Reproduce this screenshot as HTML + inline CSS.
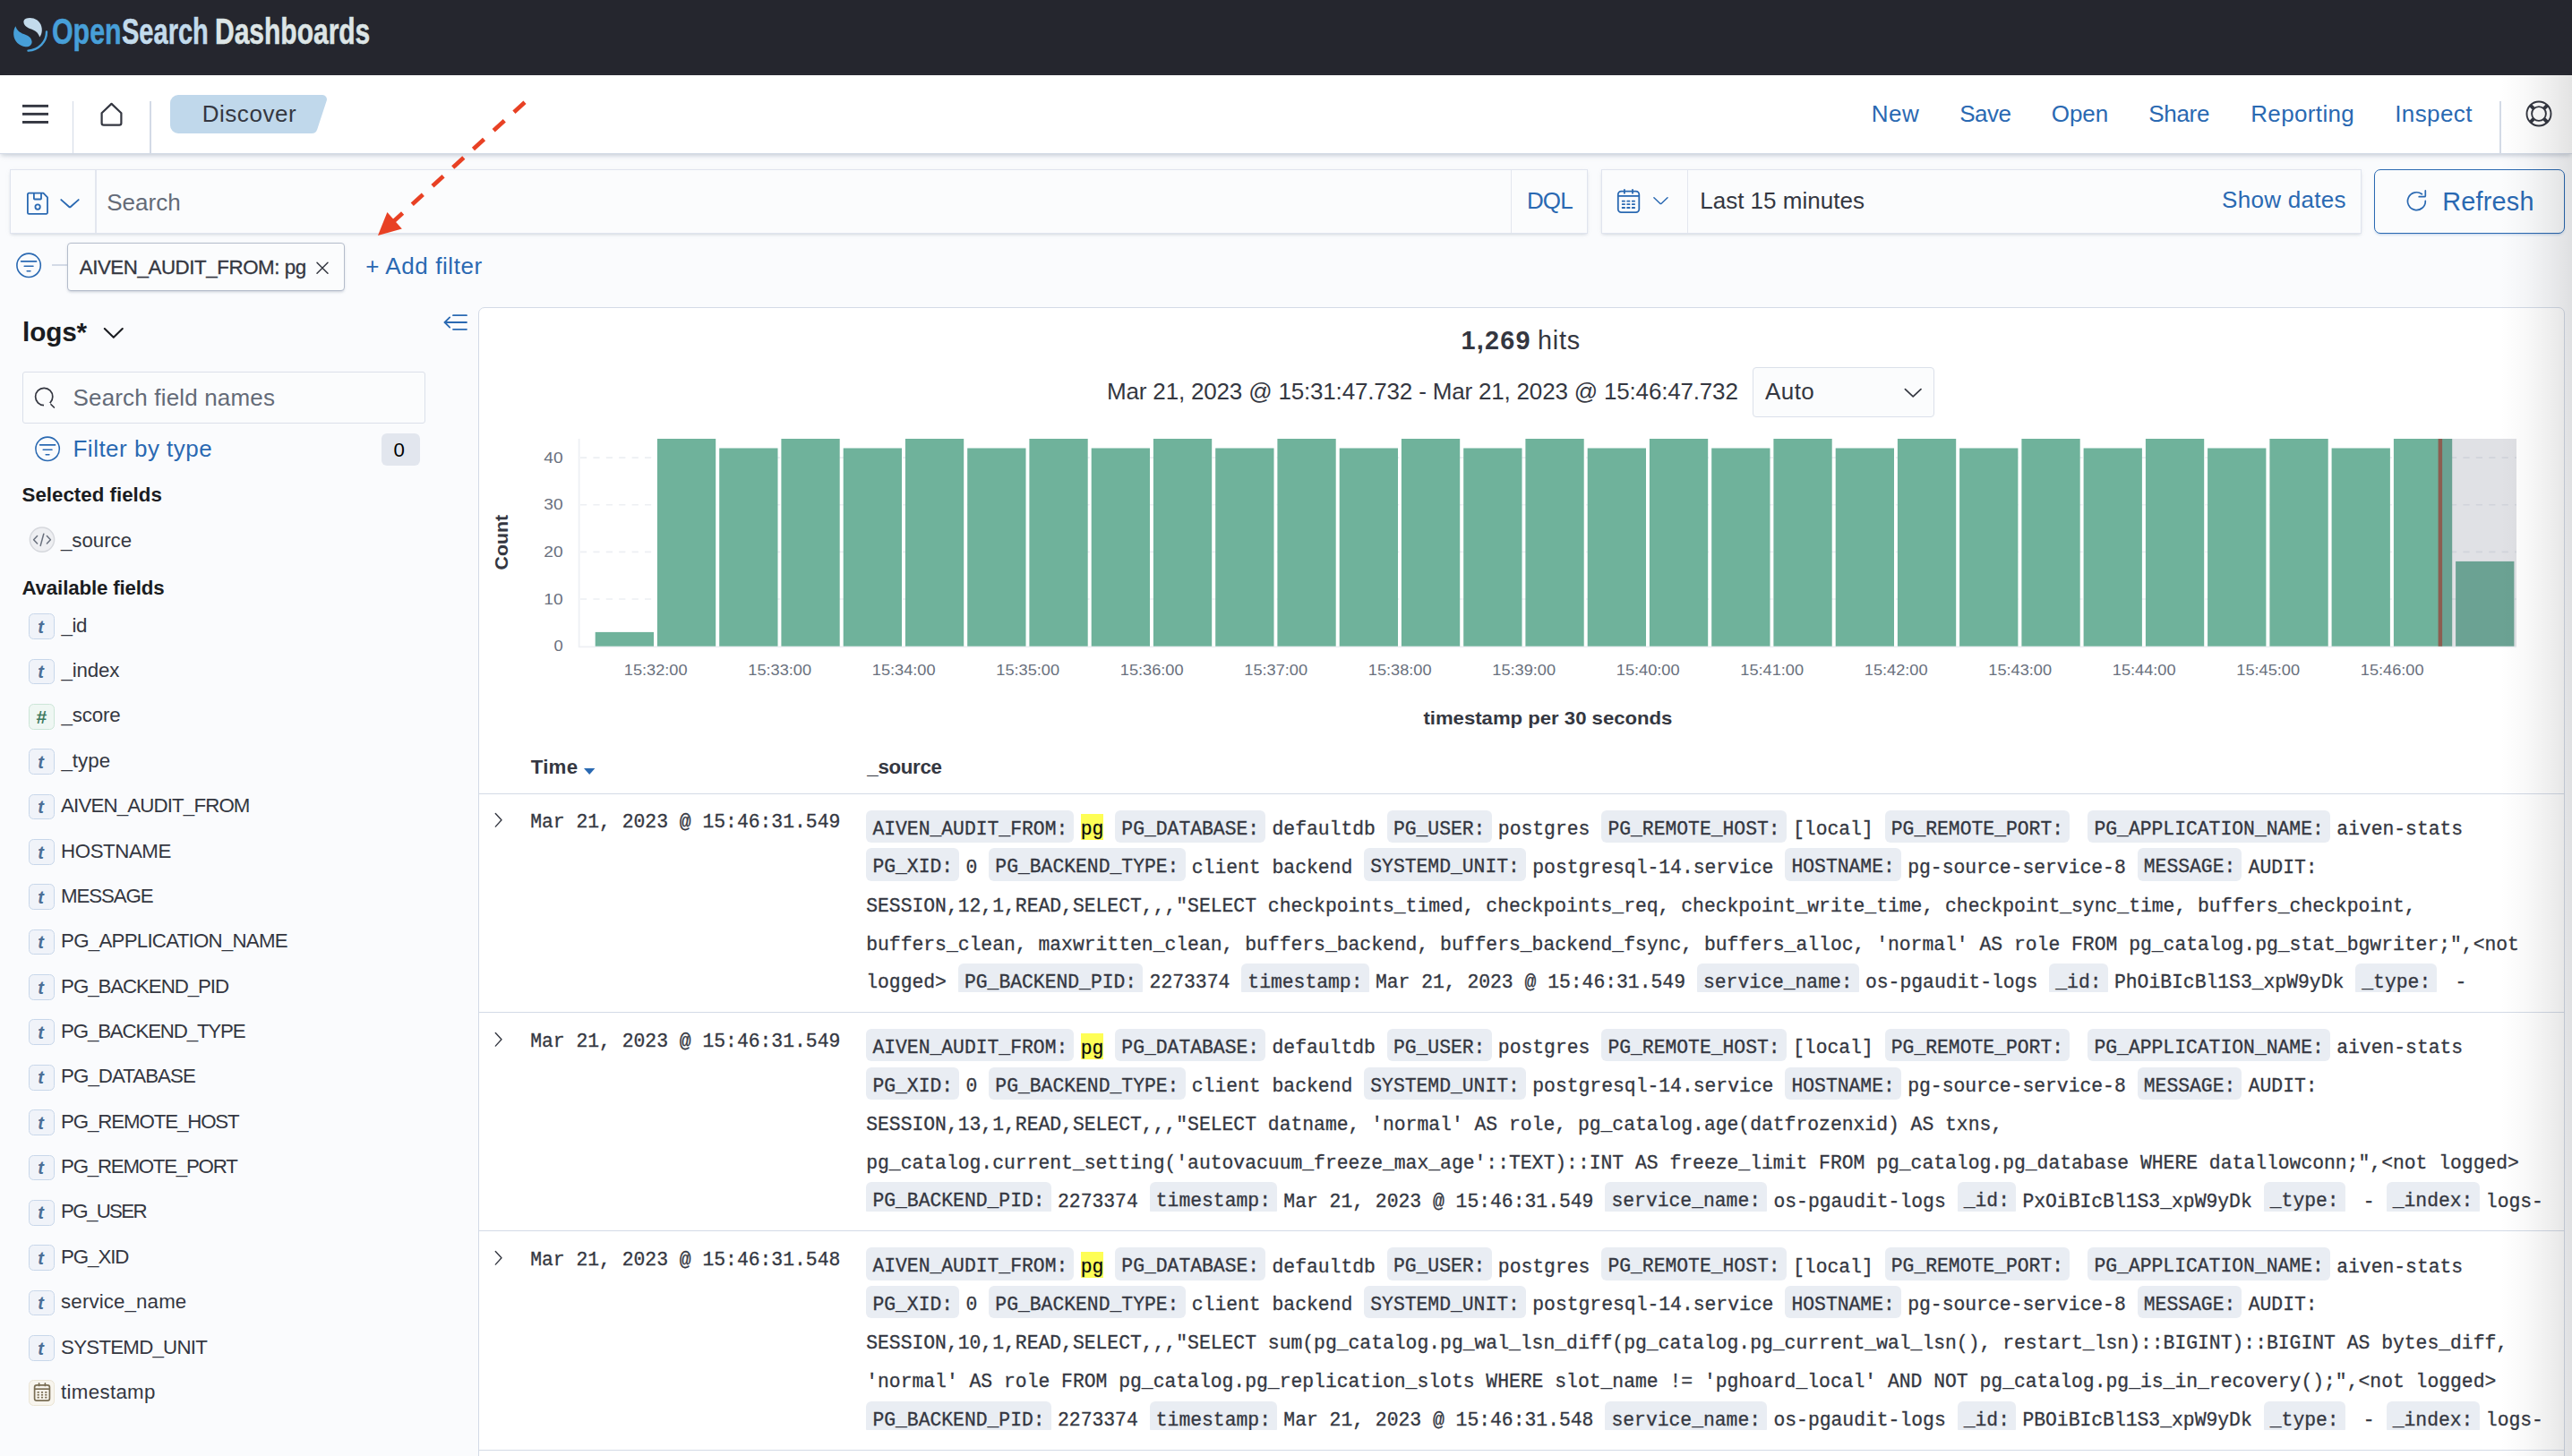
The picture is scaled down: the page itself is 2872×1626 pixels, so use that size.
<!DOCTYPE html><html lang='en'><head><meta charset='utf-8'><title>Discover - OpenSearch Dashboards</title><style>
*{box-sizing:border-box}
html,body{margin:0;padding:0}
html{overflow:hidden;background:#fafbfd}
body{width:2872px;height:1626px;overflow:hidden;background:#fafbfd;font-family:'Liberation Sans',sans-serif;color:#343741;position:relative}
.abs{position:absolute}
.t{position:absolute;white-space:pre;line-height:1;font-family:'Liberation Sans',sans-serif}
svg{position:absolute;overflow:visible}
#hdr{left:0;top:0;width:2872px;height:83.5px;background:#25262e}
.logo{position:absolute;white-space:pre;line-height:1;font-weight:700;font-family:'Liberation Sans',sans-serif;transform-origin:0 0}
#nav{left:0;top:83.5px;width:2872px;height:88px;background:#fff;border-bottom:1.5px solid #d3dae6;box-shadow:0 3px 4px -1px rgba(152,162,179,.35),0 2px 9px -3px rgba(152,162,179,.3)}
.vdiv{position:absolute;width:1.4px;background:#d3dae6}
.box{position:absolute;background:#fbfcfd;border:1.6px solid #e0e4ee;box-shadow:0 2px 3px -1px rgba(152,162,179,.3),0 1px 6px -2px rgba(152,162,179,.25)}
.mono{font-family:'Liberation Mono',monospace;font-size:21.37px;white-space:pre;color:#343741;-webkit-text-stroke:0.3px #343741}
.ln{position:absolute;left:967.2px;height:43.2px;line-height:43.2px}
.k{background:#e9edf3;border-radius:6px;padding:9.3px 7.2px 3px 7.2px;margin-right:7.2px}
mark{background:#fefe55;color:#000;padding:4.5px 0 0.5px 0}
.md{-webkit-text-stroke:0.3px #343741}
.tok{position:absolute;left:32.1px;width:28.7px;height:28.8px;border:1.8px solid;border-radius:5.5px}
.row{position:absolute;left:535px;width:2328px;border-top:1.3px solid #d3dae6}
.clip{position:absolute;left:960px;width:1895px;overflow:hidden}
</style></head><body>
<header id="hdr" class="abs">
<svg style="left:14px;top:19px" width="40" height="39" viewBox="0 0 40 39">
<path d="M12.5 4.2 C13.5 1.2 19 0.2 23.5 1.6 C29.5 3.6 33.2 9 32.8 15.2 C32.6 18.6 31.6 20.6 30.2 22.4 C28.8 17.6 25.4 15.2 21 13.6 C16.6 12 11.6 9 12.5 4.2Z" fill="#c3dbec"/>
<path d="M3.4 10.2 C4.6 14.6 8 17.4 12.6 19 C17.6 20.8 21.2 23.2 21.6 27.4 C21.9 31 18.8 33.4 14.4 33.2 C7.6 32.8 1.6 27 1.2 19.6 C1 16 1.8 12.8 3.4 10.2Z" fill="#479fd8"/>
<path d="M38 16.5 C38.2 27.5 29.5 36.6 17.5 37.6" fill="none" stroke="#479fd8" stroke-width="2.4" stroke-linecap="round"/>
</svg>
<span class="logo" style="left:58.2px;top:14.9px;font-size:41.3px;color:#479fd8;-webkit-text-stroke:0.55px #479fd8;transform:scaleX(0.7352)">Open</span><span class="logo" style="left:136.1px;top:14.9px;font-size:41.3px;color:#c3dbec;-webkit-text-stroke:0.55px #c3dbec;transform:scaleX(0.7027)">Search</span><span class="logo" style="left:239.7px;top:14.9px;font-size:41.3px;color:#dde5e6;-webkit-text-stroke:0.55px #dde5e6;transform:scaleX(0.7261)">Dashboards</span>
</header>
<nav id="nav" class="abs"></nav>
<div class="vdiv" style="left:80.7px;top:113px;height:58.5px"></div>
<div class="vdiv" style="left:167.2px;top:113px;height:58.5px"></div>
<div class="vdiv" style="left:2791.4px;top:113px;height:58.5px"></div>
<svg style="left:25px;top:116px" width="30" height="24"><g fill="#343741"><rect x="0" y="0.9" width="29" height="2.9"/><rect x="0" y="9.9" width="29" height="2.9"/><rect x="0" y="19" width="29" height="2.9"/></g></svg>
<svg style="left:110px;top:113px" width="30" height="30"><path d="M3.6 13.2 L14.5 2.9 L25.4 13.2 V24.4 a2.2 2.2 0 0 1 -2.2 2.2 H5.8 a2.2 2.2 0 0 1 -2.2 -2.2 Z" fill="none" stroke="#343741" stroke-width="2.2" stroke-linejoin="round"/></svg>
<svg style="left:190px;top:106px" width="176" height="43"><path d="M9 0 H170 a5 5 0 0 1 4.7 6.6 L164.2 38.5 a6.5 6.5 0 0 1 -6.2 4.5 H9 a9 9 0 0 1 -9 -9 V9 a9 9 0 0 1 9 -9Z" fill="#c0d8eb"/></svg>
<span class="t" style="left:225.7px;top:114.0px;font-size:26.01px;letter-spacing:0.54px;color:#343741;">Discover</span>
<span class="t" style="left:2089.8px;top:114.0px;font-size:26.01px;letter-spacing:0.46px;color:#2a69b2;">New</span>
<span class="t" style="left:2188.2px;top:114.0px;font-size:26.01px;letter-spacing:-0.49px;color:#2a69b2;">Save</span>
<span class="t" style="left:2290.7px;top:114.0px;font-size:26.01px;letter-spacing:-0.03px;color:#2a69b2;">Open</span>
<span class="t" style="left:2399.2px;top:114.0px;font-size:26.01px;letter-spacing:-0.28px;color:#2a69b2;">Share</span>
<span class="t" style="left:2513.2px;top:114.0px;font-size:26.01px;letter-spacing:0.36px;color:#2a69b2;">Reporting</span>
<span class="t" style="left:2674.2px;top:114.0px;font-size:26.01px;letter-spacing:0.41px;color:#2a69b2;">Inspect</span>
<svg style="left:2819.5px;top:112.3px" width="30" height="30" viewBox="0 0 30 30"><g fill="none" stroke="#343741" stroke-width="1.9"><circle cx="15" cy="15" r="13.5"/><circle cx="15" cy="15" r="7.9"/><path d="M5.6 5.6 L9.3 9.3 M24.4 5.6 L20.7 9.3 M5.6 24.4 L9.3 20.7 M24.4 24.4 L20.7 20.7" stroke-width="4"/></g></svg>
<div class="box" style="left:10.5px;top:189px;width:1762px;height:71.5px"></div>
<div class="vdiv" style="left:106.3px;top:190px;height:69.5px;background:#e3e7ef"></div>
<div class="vdiv" style="left:1686.6px;top:190px;height:69.5px;background:#e3e7ef"></div>
<svg style="left:29px;top:214px" width="26" height="27" viewBox="0 0 26 27"><g fill="none" stroke="#2a69b2" stroke-width="1.8" stroke-linejoin="round"><path d="M3.2 1.7 H19.4 L24 6.4 V23.5 a1.3 1.3 0 0 1 -1.3 1.3 H3.2 a1.3 1.3 0 0 1 -1.3 -1.3 V3 a1.3 1.3 0 0 1 1.3 -1.3Z"/><path d="M8.9 1.9 V7.7 a0.8 0.8 0 0 0 0.8 0.8 H16.2 a0.8 0.8 0 0 0 0.8 -0.8 V1.9"/><circle cx="13.1" cy="17.1" r="2.7"/></g></svg>
<svg style="left:67px;top:220px" width="23" height="14"><path d="M1.3 3.1 L10.2 11 a1.2 1.2 0 0 0 1.6 0 L20.7 3.1" fill="none" stroke="#2a69b2" stroke-width="1.9" stroke-linecap="round" stroke-linejoin="round"/></svg>
<span class="t" style="left:119.2px;top:212.6px;font-size:26.01px;letter-spacing:0.02px;color:#646b78;">Search</span>
<span class="t" style="left:1704.9px;top:210.9px;font-size:26.01px;letter-spacing:-0.82px;color:#2a69b2;">DQL</span>
<div class="box" style="left:1787.5px;top:189px;width:849px;height:71.5px"></div>
<div class="vdiv" style="left:1883.5px;top:190px;height:69.5px;background:#e3e7ef"></div>
<svg style="left:1805px;top:210px" width="28" height="29" viewBox="0 0 28 29"><g fill="none" stroke="#2a69b2" stroke-width="1.8"><rect x="1.8" y="3.6" width="23.5" height="23.6" rx="3.6"/><path d="M1.8 8.9 H25.3"/><path d="M8.9 1.8 V5.8 M18 1.8 V5.8" stroke-linecap="round"/></g><g fill="#2a69b2"><rect x="5.9" y="13.7" width="3.9" height="1.9" rx=".5"/><rect x="11.4" y="13.7" width="3.9" height="1.9" rx=".5"/><rect x="17" y="13.7" width="3.9" height="1.9" rx=".5"/><rect x="5.9" y="17.2" width="3.9" height="1.9" rx=".5"/><rect x="11.4" y="17.2" width="3.9" height="1.9" rx=".5"/><rect x="17" y="17.2" width="3.9" height="1.9" rx=".5"/><rect x="5.9" y="21" width="3.9" height="1.9" rx=".5"/><rect x="11.4" y="21" width="3.9" height="1.9" rx=".5"/><rect x="17" y="21" width="3.9" height="1.9" rx=".5"/></g></svg>
<svg style="left:1846px;top:219px" width="18" height="11"><path d="M0.9 1.8 L7.7 8.2 a1.1 1.1 0 0 0 1.5 0 L16 1.8" fill="none" stroke="#2a69b2" stroke-width="1.5" stroke-linecap="round" stroke-linejoin="round"/></svg>
<span class="t" style="left:1898.2px;top:210.9px;font-size:26.01px;letter-spacing:0.01px;color:#343741;">Last 15 minutes</span>
<span class="t" style="left:2481.0px;top:210.3px;font-size:26.01px;letter-spacing:0.30px;color:#2a69b2;">Show dates</span>
<div class="abs" style="left:2651px;top:189px;width:212.6px;height:71.5px;border:1.8px solid #2a69b2;border-radius:7px;background:#fbfcfd;box-shadow:0 2px 3px -1px rgba(42,105,178,.3)"></div>
<svg style="left:2686px;top:211px" width="26" height="26" viewBox="0 0 26 26"><path d="M18.4 5.8 A9.9 9.9 0 1 0 22.3 13.4" fill="none" stroke="#2a69b2" stroke-width="1.7" stroke-linecap="round"/><path d="M22.3 1.9 V7.7 a1 1 0 0 1 -1 1 H15.2" fill="none" stroke="#2a69b2" stroke-width="1.7" stroke-linecap="round" stroke-linejoin="round"/></svg>
<span class="t" style="left:2727.2px;top:210.6px;font-size:28.8px;letter-spacing:0.25px;color:#2a69b2;">Refresh</span>
<svg style="left:17px;top:281px" width="31" height="31" viewBox="0 0 31 31"><g fill="none" stroke="#2a69b2" stroke-width="1.6" stroke-linecap="round"><circle cx="15.1" cy="15.3" r="13.2"/><path d="M6.6 10.9 H23.6 M10.2 16.3 H20 M13.2 21.8 H16.9"/></g></svg>
<div class="abs" style="left:57.5px;top:295.2px;width:18px;height:1.8px;background:#d3dae6"></div>
<div class="abs" style="left:75.4px;top:271.3px;width:309.3px;height:53.4px;background:#fbfcfd;border:1.9px solid #b4bccb;border-radius:4px;box-shadow:0 2px 3px -1px rgba(152,162,179,.45),0 1px 5px -2px rgba(152,162,179,.3)"></div>
<span class="t md" style="left:88.7px;top:288.0px;font-size:22.29px;letter-spacing:-0.41px;color:#343741;">AIVEN_AUDIT_FROM: pg</span>
<svg style="left:352px;top:291px" width="16" height="16"><path d="M2 2.2 L14 14.2 M14 2.2 L2 14.2" stroke="#343741" stroke-width="1.5" stroke-linecap="round"/></svg>
<span class="t" style="left:408.2px;top:284.3px;font-size:26.01px;letter-spacing:0.59px;color:#2a69b2;">+ Add filter</span>
<span class="t" style="left:25.1px;top:355.8px;font-size:29.72px;letter-spacing:-0.17px;color:#1a1c21;font-weight:700;">logs*</span>
<svg style="left:115px;top:365px" width="24" height="15"><path d="M1.8 2 L11.8 11.8 L21.8 2" fill="none" stroke="#1a1c21" stroke-width="2.1" stroke-linecap="round" stroke-linejoin="round"/></svg>
<svg style="left:495px;top:350px" width="28" height="20" viewBox="0 0 28 20"><g fill="none" stroke="#2a69b2" stroke-width="1.8" stroke-linecap="round" stroke-linejoin="round"><path d="M11 2.2 H26 M1.6 10 H26 M11 17.8 H26"/><path d="M7.2 4.4 L1.6 10 L7.2 15.6"/></g></svg>
<div class="abs" style="left:25.2px;top:415.3px;width:450.3px;height:57.6px;background:#fbfcfd;border:1.8px solid #dbe0ea;border-radius:3px"></div>
<svg style="left:38px;top:432px" width="25" height="25"><circle cx="11.2" cy="11" r="9.6" fill="none" stroke="#343741" stroke-width="1.7"/><path d="M17.2 18 L22.4 23" stroke="#343741" stroke-width="1.7" stroke-linecap="round"/><path d="M11 20.8 a9.6 9.6 0 0 0 6.8 -2.8" stroke="#fbfcfd" stroke-width="3" fill="none"/></svg>
<span class="t" style="left:81.5px;top:430.5px;font-size:26.01px;letter-spacing:0.17px;color:#646b78;">Search field names</span>
<svg style="left:38px;top:486px" width="31" height="31" viewBox="0 0 31 31"><g fill="none" stroke="#2a69b2" stroke-width="1.6" stroke-linecap="round"><circle cx="15.1" cy="15.3" r="13.2"/><path d="M6.6 10.9 H23.6 M10.2 16.3 H20 M13.2 21.8 H16.9"/></g></svg>
<span class="t" style="left:81.5px;top:487.6px;font-size:26.01px;letter-spacing:0.49px;color:#2a69b2;">Filter by type</span>
<div class="abs" style="left:425.8px;top:484px;width:43px;height:35.7px;background:#e2e6ee;border-radius:6px"></div>
<span class="t" style="left:439.4px;top:491.5px;font-size:22.29px;letter-spacing:2.09px;color:#000;">0</span>
<span class="t" style="left:24.5px;top:541.9px;font-size:22.29px;letter-spacing:0.02px;color:#1a1c21;font-weight:700;">Selected fields</span>
<svg style="left:31.5px;top:587.5px" width="30" height="30" viewBox="0 0 30 30"><circle cx="15" cy="14.6" r="13.6" fill="#eeeff2" stroke="#d6d8dd" stroke-width="1.5"/><g fill="none" stroke="#69707d" stroke-width="1.5" stroke-linecap="round" stroke-linejoin="round"><path d="M9.6 10.6 L5.6 14.8 L9.6 19"/><path d="M20.4 10.6 L24.4 14.8 L20.4 19"/><path d="M16.8 8.2 L13.2 21.4"/></g></svg>
<span class="t" style="left:68.0px;top:592.9px;font-size:22.29px;letter-spacing:-0.04px;color:#343741;">_source</span>
<span class="t" style="left:24.5px;top:645.5px;font-size:22.29px;letter-spacing:-0.15px;color:#1a1c21;font-weight:700;">Available fields</span>
<div class="tok" style="top:685.1px;background:#f0f3f9;border-color:#c8d7ea"></div>
<span class="t" style="left:42.2px;top:689.6px;font-size:20px;font-weight:700;font-style:italic;color:#4b6f97">t</span>
<span class="t" style="left:68.4px;top:687.6px;font-size:22.29px;letter-spacing:-0.33px;color:#343741;">_id</span>
<div class="tok" style="top:735.5px;background:#f0f3f9;border-color:#c8d7ea"></div>
<span class="t" style="left:42.2px;top:740.0px;font-size:20px;font-weight:700;font-style:italic;color:#4b6f97">t</span>
<span class="t" style="left:68.4px;top:738.0px;font-size:22.29px;letter-spacing:-0.11px;color:#343741;">_index</span>
<div class="tok" style="top:785.8px;background:#eff7f3;border-color:#cce6d8"></div>
<span class="t" style="left:40.3px;top:789.9px;font-size:21px;font-weight:700;font-style:italic;color:#3e7a5e">#</span>
<span class="t" style="left:68.4px;top:788.4px;font-size:22.29px;letter-spacing:-0.11px;color:#343741;">_score</span>
<div class="tok" style="top:836.2px;background:#f0f3f9;border-color:#c8d7ea"></div>
<span class="t" style="left:42.2px;top:840.7px;font-size:20px;font-weight:700;font-style:italic;color:#4b6f97">t</span>
<span class="t" style="left:68.4px;top:838.7px;font-size:22.29px;letter-spacing:0.05px;color:#343741;">_type</span>
<div class="tok" style="top:886.6px;background:#f0f3f9;border-color:#c8d7ea"></div>
<span class="t" style="left:42.2px;top:891.1px;font-size:20px;font-weight:700;font-style:italic;color:#4b6f97">t</span>
<span class="t" style="left:68.1px;top:889.1px;font-size:22.29px;letter-spacing:-0.85px;color:#343741;">AIVEN_AUDIT_FROM</span>
<div class="tok" style="top:937.0px;background:#f0f3f9;border-color:#c8d7ea"></div>
<span class="t" style="left:42.2px;top:941.5px;font-size:20px;font-weight:700;font-style:italic;color:#4b6f97">t</span>
<span class="t" style="left:68.1px;top:939.5px;font-size:22.29px;letter-spacing:-0.44px;color:#343741;">HOSTNAME</span>
<div class="tok" style="top:987.3px;background:#f0f3f9;border-color:#c8d7ea"></div>
<span class="t" style="left:42.2px;top:991.8px;font-size:20px;font-weight:700;font-style:italic;color:#4b6f97">t</span>
<span class="t" style="left:68.1px;top:989.9px;font-size:22.29px;letter-spacing:-1.11px;color:#343741;">MESSAGE</span>
<div class="tok" style="top:1037.7px;background:#f0f3f9;border-color:#c8d7ea"></div>
<span class="t" style="left:42.2px;top:1042.2px;font-size:20px;font-weight:700;font-style:italic;color:#4b6f97">t</span>
<span class="t" style="left:68.1px;top:1040.2px;font-size:22.29px;letter-spacing:-0.75px;color:#343741;">PG_APPLICATION_NAME</span>
<div class="tok" style="top:1088.1px;background:#f0f3f9;border-color:#c8d7ea"></div>
<span class="t" style="left:42.2px;top:1092.6px;font-size:20px;font-weight:700;font-style:italic;color:#4b6f97">t</span>
<span class="t" style="left:68.1px;top:1090.6px;font-size:22.29px;letter-spacing:-1.07px;color:#343741;">PG_BACKEND_PID</span>
<div class="tok" style="top:1138.4px;background:#f0f3f9;border-color:#c8d7ea"></div>
<span class="t" style="left:42.2px;top:1142.9px;font-size:20px;font-weight:700;font-style:italic;color:#4b6f97">t</span>
<span class="t" style="left:68.1px;top:1141.0px;font-size:22.29px;letter-spacing:-1.17px;color:#343741;">PG_BACKEND_TYPE</span>
<div class="tok" style="top:1188.8px;background:#f0f3f9;border-color:#c8d7ea"></div>
<span class="t" style="left:42.2px;top:1193.3px;font-size:20px;font-weight:700;font-style:italic;color:#4b6f97">t</span>
<span class="t" style="left:68.1px;top:1191.3px;font-size:22.29px;letter-spacing:-0.95px;color:#343741;">PG_DATABASE</span>
<div class="tok" style="top:1239.2px;background:#f0f3f9;border-color:#c8d7ea"></div>
<span class="t" style="left:42.2px;top:1243.7px;font-size:20px;font-weight:700;font-style:italic;color:#4b6f97">t</span>
<span class="t" style="left:68.1px;top:1241.7px;font-size:22.29px;letter-spacing:-1.12px;color:#343741;">PG_REMOTE_HOST</span>
<div class="tok" style="top:1289.5px;background:#f0f3f9;border-color:#c8d7ea"></div>
<span class="t" style="left:42.2px;top:1294.0px;font-size:20px;font-weight:700;font-style:italic;color:#4b6f97">t</span>
<span class="t" style="left:68.1px;top:1292.1px;font-size:22.29px;letter-spacing:-1.24px;color:#343741;">PG_REMOTE_PORT</span>
<div class="tok" style="top:1339.9px;background:#f0f3f9;border-color:#c8d7ea"></div>
<span class="t" style="left:42.2px;top:1344.4px;font-size:20px;font-weight:700;font-style:italic;color:#4b6f97">t</span>
<span class="t" style="left:68.1px;top:1342.4px;font-size:22.29px;letter-spacing:-1.68px;color:#343741;">PG_USER</span>
<div class="tok" style="top:1390.3px;background:#f0f3f9;border-color:#c8d7ea"></div>
<span class="t" style="left:42.2px;top:1394.8px;font-size:20px;font-weight:700;font-style:italic;color:#4b6f97">t</span>
<span class="t" style="left:68.1px;top:1392.8px;font-size:22.29px;letter-spacing:-1.10px;color:#343741;">PG_XID</span>
<div class="tok" style="top:1440.6px;background:#f0f3f9;border-color:#c8d7ea"></div>
<span class="t" style="left:42.2px;top:1445.1px;font-size:20px;font-weight:700;font-style:italic;color:#4b6f97">t</span>
<span class="t" style="left:68.1px;top:1443.2px;font-size:22.29px;letter-spacing:0.13px;color:#343741;">service_name</span>
<div class="tok" style="top:1491.0px;background:#f0f3f9;border-color:#c8d7ea"></div>
<span class="t" style="left:42.2px;top:1495.5px;font-size:20px;font-weight:700;font-style:italic;color:#4b6f97">t</span>
<span class="t" style="left:68.1px;top:1493.6px;font-size:22.29px;letter-spacing:-0.76px;color:#343741;">SYSTEMD_UNIT</span>
<div class="tok" style="top:1541.4px;background:#f8f5ee;border-color:#eae4d4"></div>
<svg style="left:36.6px;top:1544.2px" width="20" height="22" viewBox="0 0 20 22"><g fill="none" stroke="#7a6e54" stroke-width="1.7"><rect x="1.6" y="2.8" width="16.8" height="17.4" rx="2.4"/><path d="M1.6 7.2 H18.4"/><path d="M6.6 0.9 V3.4 M13.4 0.9 V3.4" stroke-linecap="round"/></g><g fill="#7a6e54"><rect x="4.6" y="10" width="2.2" height="1.7"/><rect x="8.9" y="10" width="2.2" height="1.7"/><rect x="13.2" y="10" width="2.2" height="1.7"/><rect x="4.6" y="12.9" width="2.2" height="1.7"/><rect x="8.9" y="12.9" width="2.2" height="1.7"/><rect x="13.2" y="12.9" width="2.2" height="1.7"/><rect x="4.6" y="15.8" width="2.2" height="1.7"/><rect x="8.9" y="15.8" width="2.2" height="1.7"/><rect x="13.2" y="15.8" width="2.2" height="1.7"/></g></svg>
<span class="t" style="left:68.1px;top:1543.9px;font-size:22.29px;letter-spacing:0.31px;color:#343741;">timestamp</span>
<main class="abs" style="left:533.9px;top:342.8px;width:2330.2px;height:1300px;background:#fff;border:1.3px solid #d3dae6;border-radius:7px 7px 0 0"></main>
<span class="t" style="left:1631.6px;top:366.4px;font-size:28.8px;letter-spacing:1.22px;color:#343741;font-weight:700;">1,269</span>
<span class="t" style="left:1716.9px;top:366.4px;font-size:28.8px;letter-spacing:0.85px;color:#343741;">hits</span>
<span class="t" style="left:1236.1px;top:423.8px;font-size:26.01px;letter-spacing:-0.18px;color:#343741;">Mar 21, 2023 @ 15:31:47.732 - Mar 21, 2023 @ 15:46:47.732</span>
<div class="abs" style="left:1956.6px;top:409.5px;width:203.7px;height:56.8px;background:#fbfcfd;border:1.8px solid #dbe0ea;border-radius:4px"></div>
<span class="t" style="left:1970.9px;top:423.8px;font-size:26.01px;letter-spacing:0.47px;color:#343741;">Auto</span>
<svg style="left:2125.5px;top:432.5px" width="21" height="12"><path d="M1.4 1.6 L10.2 9.8 L19 1.6" fill="none" stroke="#343741" stroke-width="1.7" stroke-linecap="round" stroke-linejoin="round"/></svg>
<svg style="left:0;top:0" width="2872" height="860" font-family="'Liberation Sans',sans-serif"><path d="M646.6 490 V722.4 H2810" fill="none" stroke="#eef0f4" stroke-width="1.8"/><path d="M648 669.0 H2810" stroke="#edeff3" stroke-width="1.6" stroke-dasharray="7.2 7.2" fill="none"/><path d="M648 616.4 H2810" stroke="#edeff3" stroke-width="1.6" stroke-dasharray="7.2 7.2" fill="none"/><path d="M648 563.7 H2810" stroke="#edeff3" stroke-width="1.6" stroke-dasharray="7.2 7.2" fill="none"/><path d="M648 511.1 H2810" stroke="#edeff3" stroke-width="1.6" stroke-dasharray="7.2 7.2" fill="none"/><rect x="664.7" y="705.9" width="65.3" height="15.8" fill="#6fb29b"/><rect x="733.9" y="490.0" width="65.3" height="231.7" fill="#6fb29b"/><rect x="803.2" y="500.5" width="65.3" height="221.2" fill="#6fb29b"/><rect x="872.4" y="490.0" width="65.3" height="231.7" fill="#6fb29b"/><rect x="941.7" y="500.5" width="65.3" height="221.2" fill="#6fb29b"/><rect x="1010.9" y="490.0" width="65.3" height="231.7" fill="#6fb29b"/><rect x="1080.2" y="500.5" width="65.3" height="221.2" fill="#6fb29b"/><rect x="1149.4" y="490.0" width="65.3" height="231.7" fill="#6fb29b"/><rect x="1218.7" y="500.5" width="65.3" height="221.2" fill="#6fb29b"/><rect x="1287.9" y="490.0" width="65.3" height="231.7" fill="#6fb29b"/><rect x="1357.2" y="500.5" width="65.3" height="221.2" fill="#6fb29b"/><rect x="1426.4" y="490.0" width="65.3" height="231.7" fill="#6fb29b"/><rect x="1495.7" y="500.5" width="65.3" height="221.2" fill="#6fb29b"/><rect x="1564.9" y="490.0" width="65.3" height="231.7" fill="#6fb29b"/><rect x="1634.2" y="500.5" width="65.3" height="221.2" fill="#6fb29b"/><rect x="1703.4" y="490.0" width="65.3" height="231.7" fill="#6fb29b"/><rect x="1772.7" y="500.5" width="65.3" height="221.2" fill="#6fb29b"/><rect x="1841.9" y="490.0" width="65.3" height="231.7" fill="#6fb29b"/><rect x="1911.2" y="500.5" width="65.3" height="221.2" fill="#6fb29b"/><rect x="1980.4" y="490.0" width="65.3" height="231.7" fill="#6fb29b"/><rect x="2049.7" y="500.5" width="65.3" height="221.2" fill="#6fb29b"/><rect x="2118.9" y="490.0" width="65.3" height="231.7" fill="#6fb29b"/><rect x="2188.1" y="500.5" width="65.3" height="221.2" fill="#6fb29b"/><rect x="2257.4" y="490.0" width="65.3" height="231.7" fill="#6fb29b"/><rect x="2326.6" y="500.5" width="65.3" height="221.2" fill="#6fb29b"/><rect x="2395.9" y="490.0" width="65.3" height="231.7" fill="#6fb29b"/><rect x="2465.1" y="500.5" width="65.3" height="221.2" fill="#6fb29b"/><rect x="2534.4" y="490.0" width="65.3" height="231.7" fill="#6fb29b"/><rect x="2603.6" y="500.5" width="65.3" height="221.2" fill="#6fb29b"/><rect x="2672.9" y="490.0" width="65.3" height="231.7" fill="#6fb29b"/><rect x="2742.1" y="626.9" width="65.3" height="94.8" fill="#6fb29b"/><rect x="2727" y="490" width="83" height="231.7" fill="#5a6275" fill-opacity="0.19"/><rect x="2722.6" y="490" width="4.5" height="231.7" fill="#8d5d51"/><text x="628.6" y="727.3" font-size="16.6" fill="#69707d" text-anchor="end" textLength="10.2" lengthAdjust="spacingAndGlyphs">0</text><text x="628.6" y="674.6" font-size="16.6" fill="#69707d" text-anchor="end" textLength="21.3" lengthAdjust="spacingAndGlyphs">10</text><text x="628.6" y="622.0" font-size="16.6" fill="#69707d" text-anchor="end" textLength="21.3" lengthAdjust="spacingAndGlyphs">20</text><text x="628.6" y="569.3" font-size="16.6" fill="#69707d" text-anchor="end" textLength="21.3" lengthAdjust="spacingAndGlyphs">30</text><text x="628.6" y="516.7" font-size="16.6" fill="#69707d" text-anchor="end" textLength="21.3" lengthAdjust="spacingAndGlyphs">40</text><text x="696.8" y="754.4" font-size="16.6" fill="#69707d" textLength="70.8" lengthAdjust="spacingAndGlyphs">15:32:00</text><text x="835.3" y="754.4" font-size="16.6" fill="#69707d" textLength="70.8" lengthAdjust="spacingAndGlyphs">15:33:00</text><text x="973.8" y="754.4" font-size="16.6" fill="#69707d" textLength="70.8" lengthAdjust="spacingAndGlyphs">15:34:00</text><text x="1112.3" y="754.4" font-size="16.6" fill="#69707d" textLength="70.8" lengthAdjust="spacingAndGlyphs">15:35:00</text><text x="1250.8" y="754.4" font-size="16.6" fill="#69707d" textLength="70.8" lengthAdjust="spacingAndGlyphs">15:36:00</text><text x="1389.3" y="754.4" font-size="16.6" fill="#69707d" textLength="70.8" lengthAdjust="spacingAndGlyphs">15:37:00</text><text x="1527.8" y="754.4" font-size="16.6" fill="#69707d" textLength="70.8" lengthAdjust="spacingAndGlyphs">15:38:00</text><text x="1666.3" y="754.4" font-size="16.6" fill="#69707d" textLength="70.8" lengthAdjust="spacingAndGlyphs">15:39:00</text><text x="1804.8" y="754.4" font-size="16.6" fill="#69707d" textLength="70.8" lengthAdjust="spacingAndGlyphs">15:40:00</text><text x="1943.3" y="754.4" font-size="16.6" fill="#69707d" textLength="70.8" lengthAdjust="spacingAndGlyphs">15:41:00</text><text x="2081.8" y="754.4" font-size="16.6" fill="#69707d" textLength="70.8" lengthAdjust="spacingAndGlyphs">15:42:00</text><text x="2220.3" y="754.4" font-size="16.6" fill="#69707d" textLength="70.8" lengthAdjust="spacingAndGlyphs">15:43:00</text><text x="2358.8" y="754.4" font-size="16.6" fill="#69707d" textLength="70.8" lengthAdjust="spacingAndGlyphs">15:44:00</text><text x="2497.3" y="754.4" font-size="16.6" fill="#69707d" textLength="70.8" lengthAdjust="spacingAndGlyphs">15:45:00</text><text x="2635.8" y="754.4" font-size="16.6" fill="#69707d" textLength="70.8" lengthAdjust="spacingAndGlyphs">15:46:00</text><text x="1589.4" y="808.5" font-size="20.6" font-weight="700" fill="#343741" textLength="278" lengthAdjust="spacingAndGlyphs">timestamp per 30 seconds</text><text transform="translate(566.6 636.4) rotate(-90)" font-size="20.6" font-weight="700" fill="#343741" textLength="61.4" lengthAdjust="spacingAndGlyphs">Count</text></svg>
<span class="t" style="left:592.7px;top:845.5px;font-size:22.29px;letter-spacing:0.25px;color:#343741;font-weight:700;">Time</span>
<svg style="left:651px;top:857px" width="15" height="9"><path d="M1 1 H13.4 L7.2 8Z" fill="#2a69b2"/></svg>
<span class="t" style="left:968.3px;top:845.5px;font-size:22.29px;letter-spacing:-0.30px;color:#343741;font-weight:700;">_source</span>
<div class="row" style="top:885.8px"></div>
<svg style="left:551px;top:907.4px" width="13" height="20"><path d="M2.3 1.5 L9 8.8 L2.3 16.1" fill="none" stroke="#343741" stroke-width="1.4" stroke-linecap="round" stroke-linejoin="round"/></svg>
<div class="mono abs" style="left:592.2px;top:897.3px;height:43.2px;line-height:43.2px">Mar 21, 2023 @ 15:46:31.549</div>
<div class="clip mono" style="top:896.4px;height:212.1px">
<div class="ln" style="left:7.2px;top:8.5px"><span class="k">AIVEN_AUDIT_FROM:</span><mark>pg</mark> <span class="k">PG_DATABASE:</span>defaultdb <span class="k">PG_USER:</span>postgres <span class="k">PG_REMOTE_HOST:</span>[local] <span class="k">PG_REMOTE_PORT:</span> <span class="k">PG_APPLICATION_NAME:</span>aiven-stats</div>
<div class="ln" style="left:7.2px;top:51.4px"><span class="k">PG_XID:</span>0 <span class="k">PG_BACKEND_TYPE:</span>client backend <span class="k">SYSTEMD_UNIT:</span>postgresql-14.service <span class="k">HOSTNAME:</span>pg-source-service-8 <span class="k">MESSAGE:</span>AUDIT:</div>
<div class="ln" style="left:7.2px;top:94.3px">SESSION,12,1,READ,SELECT,,,"SELECT checkpoints_timed, checkpoints_req, checkpoint_write_time, checkpoint_sync_time, buffers_checkpoint,</div>
<div class="ln" style="left:7.2px;top:137.2px">buffers_clean, maxwritten_clean, buffers_backend, buffers_backend_fsync, buffers_alloc, 'normal' AS role FROM pg_catalog.pg_stat_bgwriter;",&lt;not</div>
<div class="ln" style="left:7.2px;top:180.1px">logged&gt; <span class="k">PG_BACKEND_PID:</span>2273374 <span class="k">timestamp:</span>Mar 21, 2023 @ 15:46:31.549 <span class="k">service_name:</span>os-pgaudit-logs <span class="k">_id:</span>PhOiBIcBl1S3_xpW9yDk <span class="k">_type:</span> -</div>
</div>
<div class="row" style="top:1130.1px"></div>
<svg style="left:551px;top:1151.7px" width="13" height="20"><path d="M2.3 1.5 L9 8.8 L2.3 16.1" fill="none" stroke="#343741" stroke-width="1.4" stroke-linecap="round" stroke-linejoin="round"/></svg>
<div class="mono abs" style="left:592.2px;top:1141.6px;height:43.2px;line-height:43.2px">Mar 21, 2023 @ 15:46:31.549</div>
<div class="clip mono" style="top:1140.7px;height:212.1px">
<div class="ln" style="left:7.2px;top:8.5px"><span class="k">AIVEN_AUDIT_FROM:</span><mark>pg</mark> <span class="k">PG_DATABASE:</span>defaultdb <span class="k">PG_USER:</span>postgres <span class="k">PG_REMOTE_HOST:</span>[local] <span class="k">PG_REMOTE_PORT:</span> <span class="k">PG_APPLICATION_NAME:</span>aiven-stats</div>
<div class="ln" style="left:7.2px;top:51.4px"><span class="k">PG_XID:</span>0 <span class="k">PG_BACKEND_TYPE:</span>client backend <span class="k">SYSTEMD_UNIT:</span>postgresql-14.service <span class="k">HOSTNAME:</span>pg-source-service-8 <span class="k">MESSAGE:</span>AUDIT:</div>
<div class="ln" style="left:7.2px;top:94.3px">SESSION,13,1,READ,SELECT,,,"SELECT datname, 'normal' AS role, pg_catalog.age(datfrozenxid) AS txns,</div>
<div class="ln" style="left:7.2px;top:137.2px">pg_catalog.current_setting('autovacuum_freeze_max_age'::TEXT)::INT AS freeze_limit FROM pg_catalog.pg_database WHERE datallowconn;",&lt;not logged&gt;</div>
<div class="ln" style="left:7.2px;top:180.1px"><span class="k">PG_BACKEND_PID:</span>2273374 <span class="k">timestamp:</span>Mar 21, 2023 @ 15:46:31.549 <span class="k">service_name:</span>os-pgaudit-logs <span class="k">_id:</span>PxOiBIcBl1S3_xpW9yDk <span class="k">_type:</span> - <span class="k">_index:</span>logs-</div>
</div>
<div class="row" style="top:1374.4px"></div>
<svg style="left:551px;top:1396.1px" width="13" height="20"><path d="M2.3 1.5 L9 8.8 L2.3 16.1" fill="none" stroke="#343741" stroke-width="1.4" stroke-linecap="round" stroke-linejoin="round"/></svg>
<div class="mono abs" style="left:592.2px;top:1386.0px;height:43.2px;line-height:43.2px">Mar 21, 2023 @ 15:46:31.548</div>
<div class="clip mono" style="top:1385.1px;height:212.1px">
<div class="ln" style="left:7.2px;top:8.5px"><span class="k">AIVEN_AUDIT_FROM:</span><mark>pg</mark> <span class="k">PG_DATABASE:</span>defaultdb <span class="k">PG_USER:</span>postgres <span class="k">PG_REMOTE_HOST:</span>[local] <span class="k">PG_REMOTE_PORT:</span> <span class="k">PG_APPLICATION_NAME:</span>aiven-stats</div>
<div class="ln" style="left:7.2px;top:51.4px"><span class="k">PG_XID:</span>0 <span class="k">PG_BACKEND_TYPE:</span>client backend <span class="k">SYSTEMD_UNIT:</span>postgresql-14.service <span class="k">HOSTNAME:</span>pg-source-service-8 <span class="k">MESSAGE:</span>AUDIT:</div>
<div class="ln" style="left:7.2px;top:94.3px">SESSION,10,1,READ,SELECT,,,"SELECT sum(pg_catalog.pg_wal_lsn_diff(pg_catalog.pg_current_wal_lsn(), restart_lsn)::BIGINT)::BIGINT AS bytes_diff,</div>
<div class="ln" style="left:7.2px;top:137.2px">'normal' AS role FROM pg_catalog.pg_replication_slots WHERE slot_name != 'pghoard_local' AND NOT pg_catalog.pg_is_in_recovery();",&lt;not logged&gt;</div>
<div class="ln" style="left:7.2px;top:180.1px"><span class="k">PG_BACKEND_PID:</span>2273374 <span class="k">timestamp:</span>Mar 21, 2023 @ 15:46:31.548 <span class="k">service_name:</span>os-pgaudit-logs <span class="k">_id:</span>PBOiBIcBl1S3_xpW9yDk <span class="k">_type:</span> - <span class="k">_index:</span>logs-</div>
</div>
<div class="row" style="top:1618.7px"></div>
<svg style="left:0;top:0" width="700" height="300"><path d="M586 114.2 L437 249.4" stroke="#e84124" stroke-width="4.7" stroke-dasharray="16.3 14.4" fill="none"/><path d="M422 262.9 L432.4 237 L448.8 255.5Z" fill="#e84124"/></svg>
<div class="abs" style="left:2792px;top:83.5px;width:80px;height:1543px;background:linear-gradient(90deg,rgba(0,0,0,0) 0%,rgba(0,0,0,.025) 35%,rgba(0,0,0,.065) 70%,rgba(0,0,0,.11) 100%);pointer-events:none"></div>
<script>(function(){var w=window.innerWidth;if(w&&Math.abs(w-2872)>2){document.documentElement.style.zoom=w/2872}})();</script>
</body></html>
